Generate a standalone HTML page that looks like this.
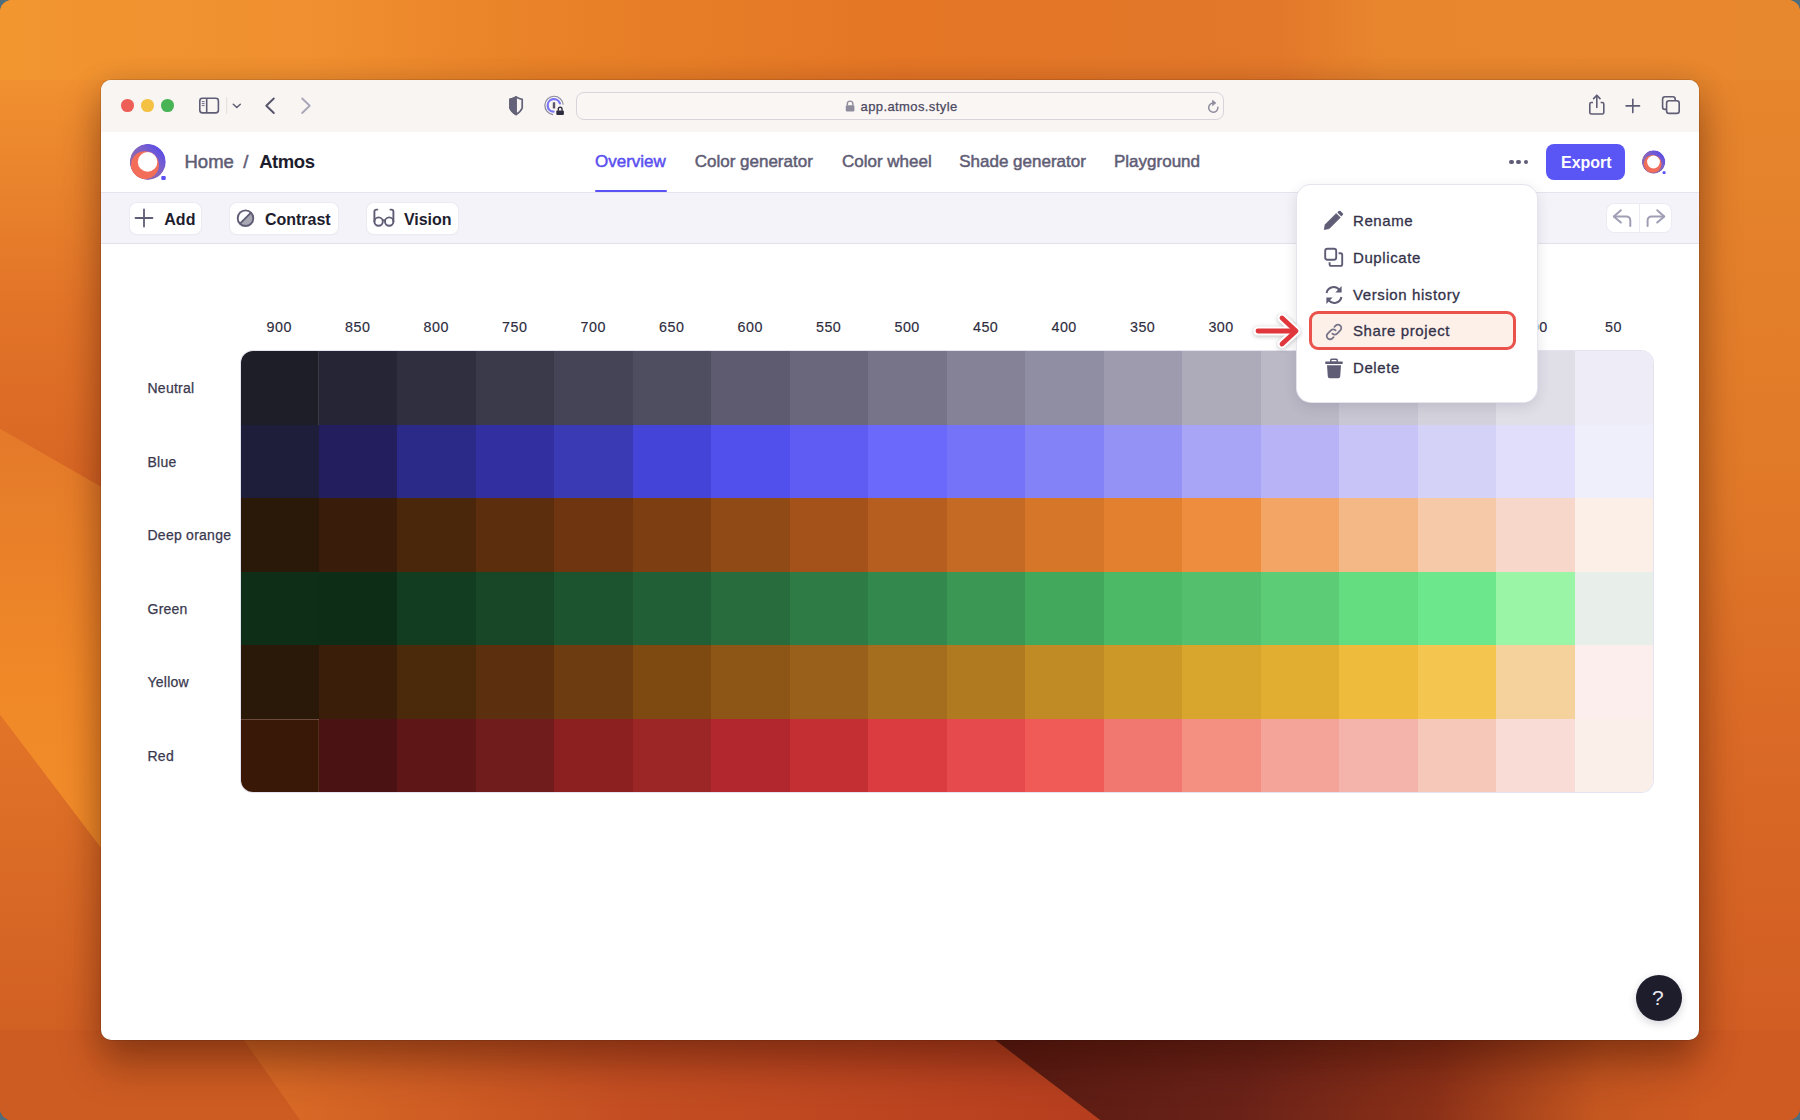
<!DOCTYPE html>
<html><head><meta charset="utf-8">
<style>
*{margin:0;padding:0;box-sizing:border-box}
html,body{width:1800px;height:1120px;overflow:hidden;background:#4f6d7a;font-family:"Liberation Sans",sans-serif}
#wall{position:absolute;left:0;top:0;width:1800px;height:1120px;border-radius:12px;overflow:hidden}
#wall svg{position:absolute;left:0;top:0;display:block}
.a{position:absolute}
svg.a{display:block;overflow:visible}
.t{position:absolute;white-space:nowrap;line-height:1}
</style></head><body>
<div id="wall"><svg width="1800" height="1120" viewBox="0 0 1800 1120">
<defs>
<linearGradient id="gbase" x1="0" y1="0" x2="0" y2="1">
<stop offset="0" stop-color="#ec8a2e"/><stop offset="0.45" stop-color="#e07828"/><stop offset="0.7" stop-color="#da6826"/><stop offset="1" stop-color="#cc5a22"/>
</linearGradient>
<linearGradient id="gtop" x1="0" y1="0" x2="1800" y2="0" gradientUnits="userSpaceOnUse">
<stop offset="0" stop-color="#f29630"/><stop offset="0.17" stop-color="#f09030"/><stop offset="0.3" stop-color="#e98228"/><stop offset="0.5" stop-color="#e47626"/><stop offset="0.71" stop-color="#e3782a"/><stop offset="0.77" stop-color="#e8862e"/><stop offset="1" stop-color="#e8882e"/>
</linearGradient>
<linearGradient id="gl1" x1="0" y1="80" x2="0" y2="486" gradientUnits="userSpaceOnUse">
<stop offset="0" stop-color="#f09030"/><stop offset="0.55" stop-color="#e27428"/><stop offset="1" stop-color="#d86624"/>
</linearGradient>
<linearGradient id="gl2" x1="0" y1="430" x2="0" y2="845" gradientUnits="userSpaceOnUse">
<stop offset="0" stop-color="#e47a2a"/><stop offset="0.6" stop-color="#f08828"/><stop offset="1" stop-color="#f28c2a"/>
</linearGradient>
<linearGradient id="gl3" x1="0" y1="715" x2="0" y2="1120" gradientUnits="userSpaceOnUse">
<stop offset="0" stop-color="#e27428"/><stop offset="1" stop-color="#cc5a22"/>
</linearGradient>
<linearGradient id="gr" x1="0" y1="0" x2="0" y2="1120" gradientUnits="userSpaceOnUse">
<stop offset="0" stop-color="#e8882e"/><stop offset="0.45" stop-color="#e07828"/><stop offset="0.65" stop-color="#da6a26"/><stop offset="1" stop-color="#cf5a22"/>
</linearGradient>
<linearGradient id="gb1" x1="245" y1="0" x2="1100" y2="0" gradientUnits="userSpaceOnUse">
<stop offset="0" stop-color="#da6c26"/><stop offset="0.45" stop-color="#c44e22"/><stop offset="1" stop-color="#b63e1f"/>
</linearGradient>
<linearGradient id="gb2" x1="1000" y1="1030" x2="1700" y2="1130" gradientUnits="userSpaceOnUse">
<stop offset="0" stop-color="#581a12"/><stop offset="0.35" stop-color="#6a2218"/><stop offset="0.62" stop-color="#8a3018"/><stop offset="0.85" stop-color="#c45620"/><stop offset="1" stop-color="#cf5a22"/>
</linearGradient>
</defs>
<rect width="1800" height="1120" fill="url(#gbase)"/>
<rect x="0" y="0" width="1800" height="90" fill="url(#gtop)"/>
<polygon points="0,80 110,80 110,492 0,429" fill="url(#gl1)"/>
<polygon points="0,429 110,492 110,860 0,715" fill="url(#gl2)"/>
<polygon points="0,715 110,860 110,1120 0,1120" fill="url(#gl3)"/>
<rect x="1690" y="80" width="110" height="955" fill="url(#gr)"/>
<rect x="0" y="1030" width="1700" height="90" fill="#cd5c22"/>
<polygon points="237,1030 982,1030 1100,1120 300,1120" fill="url(#gb1)"/>
<polygon points="982,1030 1800,1030 1800,1120 1100,1120" fill="url(#gb2)"/>
</svg></div>
<div class="a" style="left:101px;top:80px;width:1598px;height:960px;background:#fff;border-radius:10px;box-shadow:0 24px 40px rgba(50,10,0,.38),0 2px 30px rgba(50,10,0,.14),0 0 0 0.5px rgba(0,0,0,.2)"></div>
<div class="a" style="left:101px;top:80px;width:1598px;height:53px;background:#f9f5f3;border-radius:10px 10px 0 0;border-bottom:1px solid #d9d5d6"></div>
<div class="a" style="left:101px;top:132px;width:1598px;height:61px;background:#fff;border-bottom:1px solid #e5e4ee"></div>
<div class="a" style="left:101px;top:193px;width:1598px;height:51px;background:#f4f3f9;border-bottom:1px solid #e3e2eb"></div>
<div class="a" style="left:121.0px;top:99.4px;width:12.6px;height:12.6px;border-radius:50%;background:#ee5f57"></div>
<div class="a" style="left:141.0px;top:99.4px;width:12.6px;height:12.6px;border-radius:50%;background:#f5c143"></div>
<div class="a" style="left:161.0px;top:99.4px;width:12.6px;height:12.6px;border-radius:50%;background:#48b455"></div>
<svg class="a" style="left:196px;top:94px" width="50" height="24" viewBox="0 0 50 24"><rect x="3.8" y="4.3" width="18.6" height="14.6" rx="2.6" fill="none" stroke="#5f5d75" stroke-width="1.6"/>
<line x1="10.7" y1="4.3" x2="10.7" y2="18.9" stroke="#5f5d75" stroke-width="1.6"/>
<line x1="5.8" y1="7.6" x2="8.6" y2="7.6" stroke="#5f5d75" stroke-width="0.9"/>
<line x1="5.8" y1="9.6" x2="8.6" y2="9.6" stroke="#5f5d75" stroke-width="0.9"/>
<line x1="5.8" y1="11.6" x2="8.6" y2="11.6" stroke="#5f5d75" stroke-width="0.9"/>
<line x1="30.7" y1="3" x2="30.7" y2="20" stroke="#e2dede" stroke-width="1"/>
<polyline points="37.3,10.3 40.8,13.5 44.3,10.3" fill="none" stroke="#5f5d75" stroke-width="1.5" stroke-linecap="round" stroke-linejoin="round"/></svg>
<svg class="a" style="left:260px;top:94px" width="56" height="24" viewBox="0 0 56 24"><polyline points="13.8,4.5 6.3,11.8 13.8,19" fill="none" stroke="#56546a" stroke-width="1.9" stroke-linecap="round" stroke-linejoin="round"/>
<polyline points="42.2,4.5 49.7,11.8 42.2,19" fill="none" stroke="#a9a7b8" stroke-width="1.9" stroke-linecap="round" stroke-linejoin="round"/></svg>
<svg class="a" style="left:506px;top:94px" width="22" height="24" viewBox="0 0 22 24"><path d="M10.1,3 Q6.8,4.8 4,5.3 V14 Q5.5,17.8 10.1,20.5 Q14.7,17.8 16.2,14 V5.3 Q13.4,4.8 10.1,3 Z" fill="none" stroke="#646278" stroke-width="1.7" stroke-linejoin="round"/>
<path d="M10.1,3 Q6.8,4.8 4,5.3 V14 Q5.5,17.8 10.1,20.5 Z" fill="#646278" stroke="#646278" stroke-width="1.7" stroke-linejoin="round"/></svg>
<svg class="a" style="left:542px;top:94px" width="26" height="24" viewBox="0 0 26 24"><path d="M21.2,10.6 A9.2,9.2 0 1 0 11,20.6" fill="none" stroke="#8a889a" stroke-width="1.2"/>
<path d="M17.9,9.3 A6.3,6.3 0 1 0 11.5,17.7" fill="none" stroke="#7b78f6" stroke-width="2.3" stroke-linecap="round"/>
<rect x="10.8" y="8.3" width="2.4" height="6.3" rx="0.4" fill="#56546a"/>
<path d="M16.3,16.7 v-1.6 a1.85,1.85 0 0 1 3.7,0 v1.6" fill="none" stroke="#2e2c3e" stroke-width="1.4"/>
<rect x="14.3" y="16.4" width="7.6" height="4.5" rx="1" fill="#2e2c3e"/></svg>
<div class="a" style="left:576px;top:92px;width:648px;height:28px;border:1px solid #d7d5db;border-radius:8px;background:#faf6f4"></div>
<svg class="a" style="left:843px;top:99px" width="14" height="14" viewBox="0 0 14 14"><path d="M4.3,6.5 v-1.6 a2.8,2.8 0 0 1 5.6,0 v1.6" fill="none" stroke="#8e8c9c" stroke-width="1.4"/>
<rect x="2.8" y="6.3" width="8.6" height="6.2" rx="1.2" fill="#8e8c9c"/></svg>
<div class="t" style="left:860.50px;top:99.70px;font-size:13px;color:#4a4860;letter-spacing:0.4px;-webkit-text-stroke:0.25px currentColor;">app.atmos.style</div>
<svg class="a" style="left:1204px;top:96.6px" width="18" height="18" viewBox="0 0 18 18"><path d="M13.9,10.3 A4.6,4.6 0 1 1 9.2,6" fill="none" stroke="#8e8c9c" stroke-width="1.5" stroke-linecap="round"/>
<polygon points="8.6,3.3 11.8,6 8.6,8.6" fill="#8e8c9c" stroke="#8e8c9c" stroke-width="0.8" stroke-linejoin="round"/></svg>
<svg class="a" style="left:1584px;top:92px" width="102" height="26" viewBox="0 0 102 26"><path d="M9,10.5 H7.4 a1.6,1.6 0 0 0 -1.6,1.6 V20.4 a1.6,1.6 0 0 0 1.6,1.6 H18.2 a1.6,1.6 0 0 0 1.6,-1.6 V12.1 a1.6,1.6 0 0 0 -1.6,-1.6 H16.6" fill="none" stroke="#5f5d75" stroke-width="1.6"/>
<line x1="12.8" y1="3.6" x2="12.8" y2="15.5" stroke="#5f5d75" stroke-width="1.6" stroke-linecap="round"/>
<polyline points="9.6,6.6 12.8,3.4 16,6.6" fill="none" stroke="#5f5d75" stroke-width="1.6" stroke-linecap="round" stroke-linejoin="round"/>
<line x1="48.8" y1="7.2" x2="48.8" y2="20.6" stroke="#5f5d75" stroke-width="1.6" stroke-linecap="round"/>
<line x1="42.1" y1="13.9" x2="55.5" y2="13.9" stroke="#5f5d75" stroke-width="1.6" stroke-linecap="round"/>
<rect x="78.6" y="4.8" width="12.6" height="12.6" rx="2.4" fill="none" stroke="#5f5d75" stroke-width="1.6"/>
<rect x="82.6" y="8.8" width="12.6" height="12.6" rx="2.4" fill="#f9f5f3" stroke="#5f5d75" stroke-width="1.6"/></svg>
<svg class="a" style="left:125px;top:140px" width="45" height="45" viewBox="0 0 45 45"><defs><clipPath id="lc"><circle cx="22.8" cy="21.9" r="18"/></clipPath>
<linearGradient id="lg" x1="1" y1="0" x2="0" y2="1"><stop offset="0" stop-color="#4a42f6"/><stop offset="0.38" stop-color="#7a60cc"/><stop offset="0.6" stop-color="#8a68b2"/><stop offset="1" stop-color="#8a68b2"/></linearGradient></defs>
<g clip-path="url(#lc)">
<circle cx="22.8" cy="21.9" r="18" fill="url(#lg)"/>
<circle cx="19.9" cy="25.2" r="14" fill="#f26e58"/>
</g>
<circle cx="22.6" cy="21.9" r="9.8" fill="#fff"/>
<rect x="36.3" y="36" width="4.4" height="4" rx="1" fill="#5a50f5"/></svg>
<div class="t" style="left:184.50px;top:152.64px;font-size:18.5px;color:#5f5d75;-webkit-text-stroke:0.5px currentColor;">Home</div>
<div class="t" style="left:243.20px;top:152.64px;font-size:18.5px;color:#5f5d75;-webkit-text-stroke:0.5px currentColor;">/</div>
<div class="t" style="left:259.20px;top:152.64px;font-size:18.5px;color:#1e1d2e;font-weight:700;letter-spacing:-0.45px;">Atmos</div>
<div class="t" style="left:595.00px;top:152.61px;font-size:17px;color:#5a50f0;-webkit-text-stroke:0.5px currentColor;">Overview</div>
<div class="t" style="left:694.70px;top:152.61px;font-size:17px;color:#5f5d75;-webkit-text-stroke:0.5px currentColor;">Color generator</div>
<div class="t" style="left:842.00px;top:152.61px;font-size:17px;color:#5f5d75;-webkit-text-stroke:0.5px currentColor;">Color wheel</div>
<div class="t" style="left:959.20px;top:152.61px;font-size:17px;color:#5f5d75;-webkit-text-stroke:0.5px currentColor;">Shade generator</div>
<div class="t" style="left:1114.00px;top:152.61px;font-size:17px;color:#5f5d75;-webkit-text-stroke:0.5px currentColor;">Playground</div>
<div class="a" style="left:595px;top:190px;width:72px;height:2px;background:#5b52f5;border-radius:1px"></div>
<div class="a" style="left:1509.3px;top:159.9px;width:4.4px;height:4.4px;border-radius:50%;background:#5f5d75"></div>
<div class="a" style="left:1516.4px;top:159.9px;width:4.4px;height:4.4px;border-radius:50%;background:#5f5d75"></div>
<div class="a" style="left:1523.5px;top:159.9px;width:4.4px;height:4.4px;border-radius:50%;background:#5f5d75"></div>
<div class="a" style="left:1546px;top:144px;width:79px;height:36px;background:#5a55f5;border-radius:8px"></div>
<div class="t" style="left:1561.00px;top:155.06px;font-size:16px;color:#ffffff;font-weight:700;">Export</div>
<svg class="a" style="left:1638px;top:147px" width="32" height="32" viewBox="0 0 32 32"><defs><clipPath id="lc2"><circle cx="15.6" cy="15" r="11.7"/></clipPath></defs>
<g clip-path="url(#lc2)"><circle cx="15.6" cy="15" r="11.7" fill="url(#lg)"/><circle cx="14.7" cy="16.9" r="8.9" fill="#f26e58"/></g>
<circle cx="15.5" cy="15" r="6.4" fill="#fff"/><rect x="24.6" y="24.3" width="3" height="2.8" rx="0.8" fill="#5a50f5"/></svg>
<div class="a" style="left:129.7px;top:202.6px;width:71.0px;height:31px;background:#fff;border-radius:7px;box-shadow:0 0 0 1px #ecebf3,0 1px 2px rgba(40,40,80,.06)"></div>
<div class="a" style="left:229.9px;top:202.6px;width:107.9px;height:31px;background:#fff;border-radius:7px;box-shadow:0 0 0 1px #ecebf3,0 1px 2px rgba(40,40,80,.06)"></div>
<div class="a" style="left:366.5px;top:202.6px;width:91.8px;height:31px;background:#fff;border-radius:7px;box-shadow:0 0 0 1px #ecebf3,0 1px 2px rgba(40,40,80,.06)"></div>
<svg class="a" style="left:132px;top:206px" width="26" height="24" viewBox="0 0 26 24"><line x1="12" y1="3.5" x2="12" y2="20.5" stroke="#5f5d75" stroke-width="1.8" stroke-linecap="round"/><line x1="3.5" y1="12" x2="20.5" y2="12" stroke="#5f5d75" stroke-width="1.8" stroke-linecap="round"/></svg>
<div class="t" style="left:164.30px;top:212.46px;font-size:16px;color:#1e1d2e;font-weight:700;">Add</div>
<svg class="a" style="left:234px;top:206px" width="24" height="24" viewBox="0 0 24 24"><circle cx="11.5" cy="12.2" r="7.8" fill="none" stroke="#5f5d75" stroke-width="1.9"/><path d="M17,6.7 L6,17.7 A7.8,7.8 0 0 0 17,6.7 Z" fill="#5f5d75" opacity="0.55"/><line x1="17" y1="6.7" x2="6" y2="17.7" stroke="#5f5d75" stroke-width="1.9"/></svg>
<div class="t" style="left:264.90px;top:212.46px;font-size:16px;color:#1e1d2e;font-weight:700;">Contrast</div>
<svg class="a" style="left:370px;top:206px" width="28" height="24" viewBox="0 0 28 24"><path d="M4.4,15.4 V5.6 a2,2 0 0 1 2,-2 H7.4" fill="none" stroke="#5f5d75" stroke-width="1.9" stroke-linecap="round"/><path d="M23.4,15.4 V5.6 a2,2 0 0 0 -2,-2 H20.4" fill="none" stroke="#5f5d75" stroke-width="1.9" stroke-linecap="round"/>
<circle cx="8.6" cy="15.6" r="4.2" fill="none" stroke="#5f5d75" stroke-width="1.9"/><circle cx="19.2" cy="15.6" r="4.2" fill="none" stroke="#5f5d75" stroke-width="1.9"/><path d="M12.6,14.6 Q13.9,13.4 15.2,14.6" fill="none" stroke="#5f5d75" stroke-width="1.6"/></svg>
<div class="t" style="left:403.90px;top:212.46px;font-size:16px;color:#1e1d2e;font-weight:700;">Vision</div>
<div class="a" style="left:1606.5px;top:204px;width:64.79999999999995px;height:28.30000000000001px;background:#fff;border-radius:7px;box-shadow:0 0 0 1px #ecebf3"></div>
<div class="a" style="left:1638.7px;top:204px;width:1.0px;height:28.30000000000001px;background:#ecebf3"></div>
<svg class="a" style="left:1606px;top:204px" width="66" height="29" viewBox="0 0 66 29"><polyline points="14.9,6.2 7.8,12.4 14.9,18.6" fill="none" stroke="#a09eb4" stroke-width="2" stroke-linecap="round" stroke-linejoin="round"/>
<path d="M8.2,12.4 H20.3 a4,4 0 0 1 4,4 V21.9" fill="none" stroke="#a09eb4" stroke-width="2" stroke-linecap="round"/>
<polyline points="51.2,6.2 58.3,12.4 51.2,18.6" fill="none" stroke="#a09eb4" stroke-width="2" stroke-linecap="round" stroke-linejoin="round"/>
<path d="M57.9,12.4 H45.6 a4,4 0 0 0 -4,4 V21.9" fill="none" stroke="#a09eb4" stroke-width="2" stroke-linecap="round"/></svg>
<div class="t" style="left:239.25px;top:320.10px;width:80px;text-align:center;font-size:14.3px;letter-spacing:0.5px;color:#2e2c3e;-webkit-text-stroke:0.15px currentColor">900</div>
<div class="t" style="left:317.74px;top:320.10px;width:80px;text-align:center;font-size:14.3px;letter-spacing:0.5px;color:#2e2c3e;-webkit-text-stroke:0.15px currentColor">850</div>
<div class="t" style="left:396.23px;top:320.10px;width:80px;text-align:center;font-size:14.3px;letter-spacing:0.5px;color:#2e2c3e;-webkit-text-stroke:0.15px currentColor">800</div>
<div class="t" style="left:474.71px;top:320.10px;width:80px;text-align:center;font-size:14.3px;letter-spacing:0.5px;color:#2e2c3e;-webkit-text-stroke:0.15px currentColor">750</div>
<div class="t" style="left:553.21px;top:320.10px;width:80px;text-align:center;font-size:14.3px;letter-spacing:0.5px;color:#2e2c3e;-webkit-text-stroke:0.15px currentColor">700</div>
<div class="t" style="left:631.70px;top:320.10px;width:80px;text-align:center;font-size:14.3px;letter-spacing:0.5px;color:#2e2c3e;-webkit-text-stroke:0.15px currentColor">650</div>
<div class="t" style="left:710.18px;top:320.10px;width:80px;text-align:center;font-size:14.3px;letter-spacing:0.5px;color:#2e2c3e;-webkit-text-stroke:0.15px currentColor">600</div>
<div class="t" style="left:788.67px;top:320.10px;width:80px;text-align:center;font-size:14.3px;letter-spacing:0.5px;color:#2e2c3e;-webkit-text-stroke:0.15px currentColor">550</div>
<div class="t" style="left:867.16px;top:320.10px;width:80px;text-align:center;font-size:14.3px;letter-spacing:0.5px;color:#2e2c3e;-webkit-text-stroke:0.15px currentColor">500</div>
<div class="t" style="left:945.65px;top:320.10px;width:80px;text-align:center;font-size:14.3px;letter-spacing:0.5px;color:#2e2c3e;-webkit-text-stroke:0.15px currentColor">450</div>
<div class="t" style="left:1024.14px;top:320.10px;width:80px;text-align:center;font-size:14.3px;letter-spacing:0.5px;color:#2e2c3e;-webkit-text-stroke:0.15px currentColor">400</div>
<div class="t" style="left:1102.63px;top:320.10px;width:80px;text-align:center;font-size:14.3px;letter-spacing:0.5px;color:#2e2c3e;-webkit-text-stroke:0.15px currentColor">350</div>
<div class="t" style="left:1181.12px;top:320.10px;width:80px;text-align:center;font-size:14.3px;letter-spacing:0.5px;color:#2e2c3e;-webkit-text-stroke:0.15px currentColor">300</div>
<div class="t" style="left:1259.61px;top:320.10px;width:80px;text-align:center;font-size:14.3px;letter-spacing:0.5px;color:#2e2c3e;-webkit-text-stroke:0.15px currentColor">250</div>
<div class="t" style="left:1338.10px;top:320.10px;width:80px;text-align:center;font-size:14.3px;letter-spacing:0.5px;color:#2e2c3e;-webkit-text-stroke:0.15px currentColor">200</div>
<div class="t" style="left:1416.59px;top:320.10px;width:80px;text-align:center;font-size:14.3px;letter-spacing:0.5px;color:#2e2c3e;-webkit-text-stroke:0.15px currentColor">150</div>
<div class="t" style="left:1495.08px;top:320.10px;width:80px;text-align:center;font-size:14.3px;letter-spacing:0.5px;color:#2e2c3e;-webkit-text-stroke:0.15px currentColor">100</div>
<div class="t" style="left:1573.57px;top:320.10px;width:80px;text-align:center;font-size:14.3px;letter-spacing:0.5px;color:#2e2c3e;-webkit-text-stroke:0.15px currentColor">50</div>
<div class="t" style="left:147.50px;top:381.35px;font-size:14px;color:#3a384e;letter-spacing:0.25px;-webkit-text-stroke:0.25px currentColor;">Neutral</div>
<div class="t" style="left:147.50px;top:454.82px;font-size:14px;color:#3a384e;letter-spacing:0.25px;-webkit-text-stroke:0.25px currentColor;">Blue</div>
<div class="t" style="left:147.50px;top:528.29px;font-size:14px;color:#3a384e;letter-spacing:0.25px;-webkit-text-stroke:0.25px currentColor;">Deep orange</div>
<div class="t" style="left:147.50px;top:601.76px;font-size:14px;color:#3a384e;letter-spacing:0.25px;-webkit-text-stroke:0.25px currentColor;">Green</div>
<div class="t" style="left:147.50px;top:675.23px;font-size:14px;color:#3a384e;letter-spacing:0.25px;-webkit-text-stroke:0.25px currentColor;">Yellow</div>
<div class="t" style="left:147.50px;top:748.70px;font-size:14px;color:#3a384e;letter-spacing:0.25px;-webkit-text-stroke:0.25px currentColor;">Red</div>
<div class="a" id="grid" style="left:240.5px;top:351.2px;width:1412.8px;height:440.8px;border-radius:12px;overflow:hidden;box-shadow:0 0 0 1px rgba(205,205,228,.55);display:grid;grid-template-columns:repeat(18,1fr);grid-template-rows:repeat(6,1fr)"><div style="background:#1e1e28"></div><div style="background:#262536"></div><div style="background:#302f3f"></div><div style="background:#3b3a4b"></div><div style="background:#454356"></div><div style="background:#4f4d60"></div><div style="background:#5e5b70"></div><div style="background:#6a677d"></div><div style="background:#77748a"></div><div style="background:#858298"></div><div style="background:#908ea2"></div><div style="background:#9e9bae"></div><div style="background:#adabba"></div><div style="background:#bbb9c6"></div><div style="background:#c8c6d2"></div><div style="background:#d3d2dc"></div><div style="background:#e0dfe8"></div><div style="background:#eeedf7"></div><div style="background:#1e1d3a"></div><div style="background:#231f5e"></div><div style="background:#2c2a88"></div><div style="background:#3230a0"></div><div style="background:#3a3ab5"></div><div style="background:#4544d8"></div><div style="background:#5150ec"></div><div style="background:#5f5cf4"></div><div style="background:#6a69fb"></div><div style="background:#7573f8"></div><div style="background:#8482f7"></div><div style="background:#9592f6"></div><div style="background:#a8a5f6"></div><div style="background:#b8b3f6"></div><div style="background:#c8c4f7"></div><div style="background:#d5d2f8"></div><div style="background:#e0defa"></div><div style="background:#efeefb"></div><div style="background:#2a1808"></div><div style="background:#3a1c0a"></div><div style="background:#4a260a"></div><div style="background:#5c2e0e"></div><div style="background:#6e3510"></div><div style="background:#7d3f12"></div><div style="background:#904a16"></div><div style="background:#a4521a"></div><div style="background:#b65e20"></div><div style="background:#c46a25"></div><div style="background:#d57628"></div><div style="background:#e38030"></div><div style="background:#ee8d3e"></div><div style="background:#f2a565"></div><div style="background:#f4b886"></div><div style="background:#f6c9a8"></div><div style="background:#f6d7c9"></div><div style="background:#fcefe7"></div><div style="background:#0e2e17"></div><div style="background:#0e2d17"></div><div style="background:#123d20"></div><div style="background:#174727"></div><div style="background:#1d5430"></div><div style="background:#215f36"></div><div style="background:#286c3d"></div><div style="background:#2e7b45"></div><div style="background:#33894d"></div><div style="background:#3a9854"></div><div style="background:#42a95c"></div><div style="background:#4bb966"></div><div style="background:#54c06e"></div><div style="background:#5ccd76"></div><div style="background:#64dc80"></div><div style="background:#6ce78b"></div><div style="background:#9bf5a6"></div><div style="background:#e8eeea"></div><div style="background:#2a1808"></div><div style="background:#3a1e0a"></div><div style="background:#4a2a0a"></div><div style="background:#5c300e"></div><div style="background:#6d3c10"></div><div style="background:#7e4a12"></div><div style="background:#8d5616"></div><div style="background:#98601a"></div><div style="background:#a56e1e"></div><div style="background:#b07a20"></div><div style="background:#c08a24"></div><div style="background:#cc9828"></div><div style="background:#d8a62c"></div><div style="background:#e1ae32"></div><div style="background:#eebb3c"></div><div style="background:#f4c650"></div><div style="background:#f5d19c"></div><div style="background:#fbeeec"></div><div style="background:#3a1808"></div><div style="background:#4a1212"></div><div style="background:#5e1617"></div><div style="background:#701c1c"></div><div style="background:#8c2020"></div><div style="background:#9c2626"></div><div style="background:#b2262d"></div><div style="background:#c42f33"></div><div style="background:#da3c40"></div><div style="background:#e64a4c"></div><div style="background:#f15b57"></div><div style="background:#f07870"></div><div style="background:#f39082"></div><div style="background:#f4a498"></div><div style="background:#f5b4ab"></div><div style="background:#f6c8ba"></div><div style="background:#f8dcd5"></div><div style="background:#fbefea"></div></div>
<div class="a" style="left:317.5px;top:351.2px;width:1.0px;height:73.5px;background:rgba(255,255,255,.13)"></div>
<div class="a" style="left:240.5px;top:718.6px;width:78.0px;height:1.0px;background:rgba(255,220,210,.25)"></div>
<div class="a" style="left:318px;top:719px;width:1px;height:73px;background:rgba(255,200,150,.12)"></div>
<div class="a" style="left:1297px;top:185px;width:240px;height:217px;background:#fff;border-radius:14px;box-shadow:0 0 0 1px #e6e4ee,0 4px 14px rgba(40,40,70,.14)"></div>
<div class="a" style="left:1309.4px;top:311.3px;width:206.19999999999982px;height:39.0px;background:#fdf0e9;border:3px solid #ea534c;border-radius:9px"></div>
<div class="t" style="left:1353.00px;top:213.30px;font-size:15px;color:#34324a;letter-spacing:0.6px;-webkit-text-stroke:0.3px currentColor;">Rename</div>
<div class="t" style="left:1353.00px;top:250.10px;font-size:15px;color:#34324a;letter-spacing:0.6px;-webkit-text-stroke:0.3px currentColor;">Duplicate</div>
<div class="t" style="left:1353.00px;top:286.90px;font-size:15px;color:#34324a;letter-spacing:0.6px;-webkit-text-stroke:0.3px currentColor;">Version history</div>
<div class="t" style="left:1353.00px;top:323.30px;font-size:15px;color:#34324a;letter-spacing:0.6px;-webkit-text-stroke:0.3px currentColor;">Share project</div>
<div class="t" style="left:1353.00px;top:360.00px;font-size:15px;color:#34324a;letter-spacing:0.6px;-webkit-text-stroke:0.3px currentColor;">Delete</div>
<svg class="a" style="left:1322px;top:209px" width="24" height="24" viewBox="0 0 24 24"><path d="M2.3,20.5 L3.2,15.6 L14.2,4.6 L18.2,8.6 L7.2,19.6 Z" fill="#5f5d75" stroke="#5f5d75" stroke-width="0.8" stroke-linejoin="round"/><path d="M15.3,3.5 L16.7,2.1 a1.3,1.3 0 0 1 1.8,0 L20.7,4.3 a1.3,1.3 0 0 1 0,1.8 L19.3,7.5 Z" fill="#5f5d75"/></svg>
<svg class="a" style="left:1322px;top:246px" width="24" height="24" viewBox="0 0 24 24"><rect x="3.2" y="2.8" width="11" height="11" rx="2.2" fill="none" stroke="#5f5d75" stroke-width="1.9"/><path d="M7.6,16.2 V18.3 a1.6,1.6 0 0 0 1.6,1.6 H18.6 a1.6,1.6 0 0 0 1.6,-1.6 V8.9 a1.6,1.6 0 0 0 -1.6,-1.6 H16.6" fill="none" stroke="#5f5d75" stroke-width="1.9"/></svg>
<svg class="a" style="left:1322px;top:283px" width="24" height="24" viewBox="0 0 24 24"><path d="M4.6,10 A7.2,7.2 0 0 1 17.6,7.2" fill="none" stroke="#5f5d75" stroke-width="2"/><polygon points="19.6,3 19.6,9.4 13.4,9.4" fill="#5f5d75"/>
<path d="M19.4,14 A7.2,7.2 0 0 1 6.4,16.8" fill="none" stroke="#5f5d75" stroke-width="2"/><polygon points="4.4,21 4.4,14.6 10.6,14.6" fill="#5f5d75"/></svg>
<svg class="a" style="left:1322px;top:320px" width="24" height="24" viewBox="0 0 24 24"><path d="M10.4,13.6 a3.3,3.3 0 0 0 4.7,0 l3.2,-3.2 a3.3,3.3 0 0 0 -4.7,-4.7 l-1.2,1.2" fill="none" stroke="#77758a" stroke-width="1.8" stroke-linecap="round"/>
<path d="M13.6,10.4 a3.3,3.3 0 0 0 -4.7,0 l-3.2,3.2 a3.3,3.3 0 0 0 4.7,4.7 l1.2,-1.2" fill="none" stroke="#77758a" stroke-width="1.8" stroke-linecap="round"/></svg>
<svg class="a" style="left:1322px;top:357px" width="24" height="24" viewBox="0 0 24 24"><rect x="3.2" y="4.6" width="17.6" height="2.4" rx="0.8" fill="#5f5d75"/><rect x="8.8" y="2.3" width="6.4" height="3" rx="0.8" fill="none" stroke="#5f5d75" stroke-width="1.5"/><path d="M5,8.3 H19 L18.2,19.6 a1.8,1.8 0 0 1 -1.8,1.6 H7.6 a1.8,1.8 0 0 1 -1.8,-1.6 Z" fill="#5f5d75"/></svg>
<svg class="a" style="left:1250px;top:308px" width="54" height="46" viewBox="0 0 54 46"><g filter="drop-shadow(0 1px 2px rgba(0,0,0,.25))"><g stroke="#fff" stroke-width="9" stroke-linecap="round" stroke-linejoin="round" fill="none"><line x1="8" y1="23" x2="45" y2="23"/><polyline points="32,10 46,23 32,36"/></g>
<g stroke="#e0373d" stroke-width="4.8" stroke-linecap="round" stroke-linejoin="round" fill="none"><line x1="8" y1="23" x2="45" y2="23"/><polyline points="32,10 46,23 32,36"/></g></g></svg>
<div class="a" style="left:1635.6px;top:974.8px;width:46.0px;height:46.0px;background:#1e1d2c;border-radius:50%;box-shadow:0 3px 8px rgba(30,30,60,.18)"></div>
<div class="t" style="left:1634.8px;top:987.02px;width:46px;text-align:center;font-size:21px;color:#e8e6ee">?</div>
</body></html>
